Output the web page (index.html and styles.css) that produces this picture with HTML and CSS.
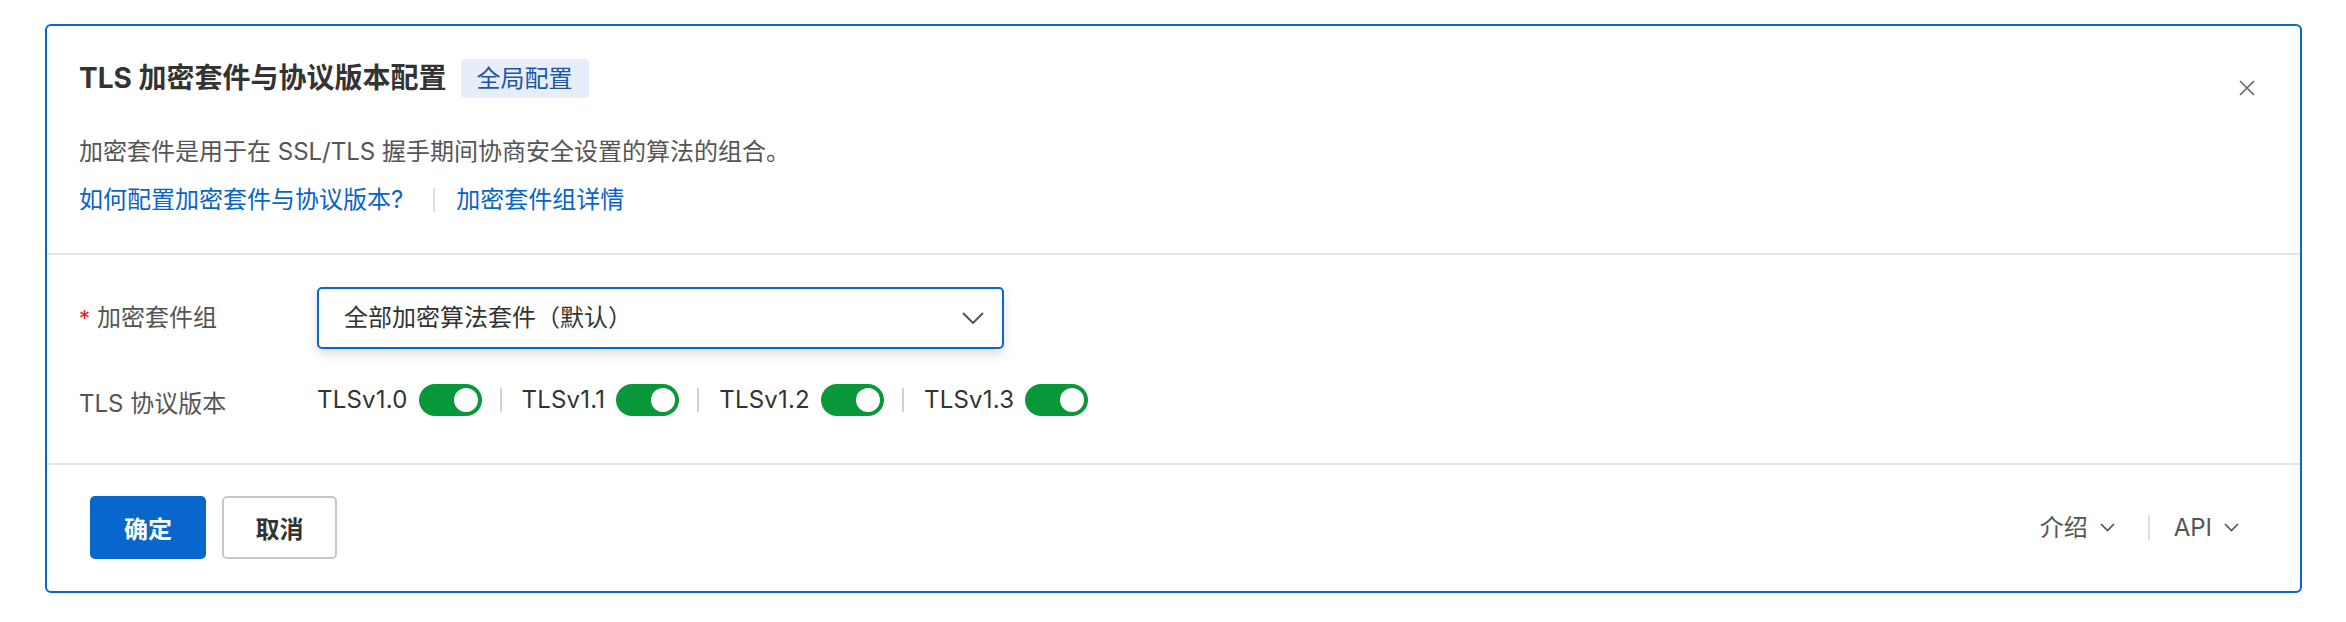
FILE: index.html
```html
<!DOCTYPE html>
<html lang="zh-CN">
<head>
<meta charset="utf-8">
<title>TLS 加密套件与协议版本配置</title>
<link rel="stylesheet" href="styles.css">
</head>
<body>
<div class="dialog">
  <button class="close" aria-label="关闭">
    <svg width="16" height="16" viewBox="0 0 16 16"><path d="M1 1L15 15M15 1L1 15" stroke="#666" stroke-width="1.6" fill="none"/></svg>
  </button>
  <div class="header">
    <div class="title-row">
      <h1 class="title">TLS 加密套件与协议版本配置</h1>
      <span class="badge">全局配置</span>
    </div>
    <p class="desc">加密套件是用于在 SSL/TLS 握手期间协商安全设置的算法的组合。</p>
    <div class="links">
      <a class="link link-first">如何配置加密套件与协议版本?</a>
      <span class="vsep"></span>
      <a class="link">加密套件组详情</a>
    </div>
  </div>
  <div class="body">
    <div class="form-row">
      <div class="label"><span class="req">*</span>加密套件组</div>
      <div class="select">
        <span class="select-text">全部加密算法套件（默认）</span>
        <svg class="chev" width="22" height="12" viewBox="0 0 22 12"><path d="M1 1L11 11L21 1" stroke="#555" stroke-width="2" fill="none"/></svg>
      </div>
    </div>
    <div class="form-row row-tls">
      <div class="label label-tls">TLS 协议版本</div>
      <div class="toggles">
        <div class="tgroup"><span class="tname">TLSv1.0</span><span class="switch"><span class="knob"></span></span></div>
        <span class="tsep"></span>
        <div class="tgroup"><span class="tname">TLSv1.1</span><span class="switch"><span class="knob"></span></span></div>
        <span class="tsep"></span>
        <div class="tgroup"><span class="tname">TLSv1.2</span><span class="switch"><span class="knob"></span></span></div>
        <span class="tsep"></span>
        <div class="tgroup"><span class="tname">TLSv1.3</span><span class="switch"><span class="knob"></span></span></div>
      </div>
    </div>
  </div>
  <div class="footer">
    <div class="actions">
      <button class="btn btn-primary">确定</button>
      <button class="btn btn-default">取消</button>
    </div>
    <div class="extras">
      <span class="extra">介绍<svg width="15" height="9" viewBox="0 0 15 9"><path d="M1 1L7.5 7.5L14 1" stroke="#555" stroke-width="1.7" fill="none"/></svg></span>
      <span class="esep"></span>
      <span class="extra">API<svg width="15" height="9" viewBox="0 0 15 9"><path d="M1 1L7.5 7.5L14 1" stroke="#555" stroke-width="1.7" fill="none"/></svg></span>
    </div>
  </div>
</div>
</body>
</html>
```
FILE: styles.css
```css
* { box-sizing: border-box; }
html, body { margin: 0; padding: 0; background: #ffffff; }
body {
  font-family: Inter, "Noto Sans CJK SC", sans-serif;
  font-size: 24px;
  color: #333;
  padding-top: 24px;
}
.dialog {
  position: relative;
  margin: 0 44px 0 45px;
  border: 2px solid #0866cc;
  border-radius: 6px;
  background: #fff;
}
.close {
  position: absolute;
  top: 54px;
  right: 45px;
  width: 16px;
  height: 16px;
  padding: 0;
  border: 0;
  background: transparent;
  display: flex;
}
.header {
  padding: 33px 80px 35px 32px;
  border-bottom: 2px solid #e5e5e5;
}
.title-row {
  display: flex;
  align-items: center;
  height: 39px;
}
.title {
  margin: 0;
  font-size: 28px;
  font-weight: 700;
  color: #333;
  line-height: 39px;
}
.badge {
  margin-left: 14px;
  height: 39px;
  line-height: 39px;
  padding: 0 16px;
  background: #e7eef9;
  color: #1d56a6;
  border-radius: 4px;
  font-size: 24px;
}
.desc {
  margin: 36px 0 0;
  line-height: 36px;
  color: #555;
}
.links {
  margin-top: 12px;
  display: flex;
  align-items: center;
  height: 36px;
}
.link {
  color: #0764c9;
  line-height: 36px;
  text-decoration: none;
}
.vsep {
  width: 2px;
  height: 24px;
  background: #dedede;
  margin: 0 21px 0 30px;
}
.body {
  padding: 32px 0 47px 32px;
}
.form-row {
  display: flex;
  align-items: center;
}
.row-tls {
  margin-top: 35px;
  height: 32px;
  align-items: flex-start;
}
.label {
  width: 238px;
  flex: none;
  color: #555;
  line-height: 36px;
  display: flex;
  align-items: center;
}
.label-tls {
  padding-top: 2px;
  line-height: 36px;
}
.req {
  color: #e02020;
  width: 18px;
  font-size: 22px;
}
.select {
  width: 687px;
  height: 62px;
  border: 2px solid #0866cc;
  border-radius: 5px;
  display: flex;
  align-items: center;
  justify-content: space-between;
  padding: 0 18px 0 25px;
  box-shadow: 0 5px 12px rgba(0, 0, 0, 0.14);
  background: #fff;
}
.select-text {
  color: #333;
  line-height: 36px;
}
.chev { display: block; }
.toggles {
  display: flex;
  align-items: center;
  height: 32px;
}
.tgroup {
  display: flex;
  align-items: center;
}
.tname {
  color: #333;
  line-height: 32px;
  margin-right: 11px;
  letter-spacing: 0.2px;
}
.switch {
  width: 63px;
  height: 32px;
  border-radius: 16px;
  background: #08983a;
  display: flex;
  align-items: center;
  justify-content: flex-end;
  padding: 0 4px;
}
.knob {
  width: 24px;
  height: 24px;
  border-radius: 50%;
  background: #fff;
}
.tsep {
  width: 2px;
  height: 24px;
  background: #d2d2d2;
  margin: 0 20px 0 18px;
}
.footer {
  border-top: 2px solid #e5e5e5;
  padding: 31px 61px 32px 43px;
  display: flex;
  align-items: center;
  justify-content: space-between;
}
.actions {
  display: flex;
  gap: 16px;
}
.btn {
  height: 63px;
  min-width: 116px;
  padding: 0 24px;
  border-radius: 5px;
  font-family: Inter, "Noto Sans CJK SC", sans-serif;
  font-size: 24px;
  font-weight: 700;
  cursor: pointer;
}
.btn-primary {
  background: #0866cc;
  border: 2px solid #0866cc;
  color: #fff;
}
.btn-default {
  background: #fff;
  border: 2px solid #c8c8c8;
  color: #333;
  min-width: 115px;
}
.extras {
  display: flex;
  align-items: center;
}
.extra {
  display: flex;
  align-items: center;
  gap: 12px;
  color: #555;
  line-height: 36px;
}
.extra svg { display: block; }
.esep {
  width: 2px;
  height: 25px;
  background: #dedede;
  margin: 0 24px 0 33px;
}
```
